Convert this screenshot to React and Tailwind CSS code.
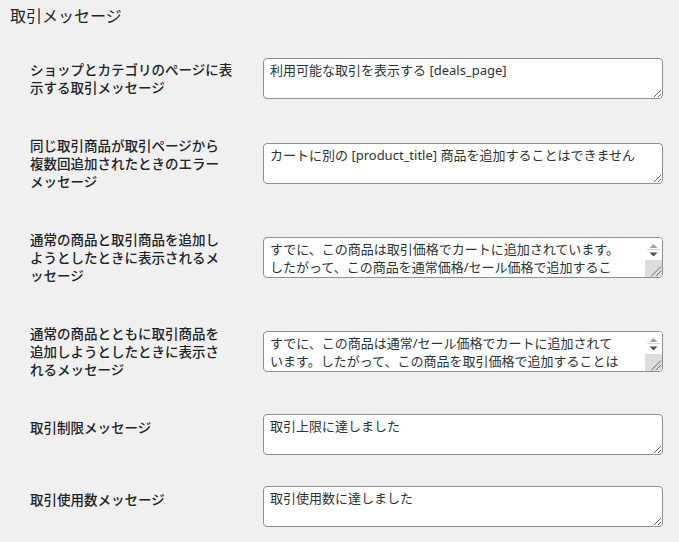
import React from "react";

const FONT = { fontFamily: '"Noto Sans", "Noto Sans CJK JP", sans-serif' };

const rows = [
  {
    label: ["ショップとカテゴリのページに表", "示する取引メッセージ"],
    value: "利用可能な取引を表示する [deals_page]",
  },
  {
    label: ["同じ取引商品が取引ページから", "複数回追加されたときのエラー", "メッセージ"],
    value: "カートに別の [product_title] 商品を追加することはできません",
  },
  {
    label: ["通常の商品と取引商品を追加し", "ようとしたときに表示されるメ", "ッセージ"],
    value:
      "すでに、この商品は取引価格でカートに追加されています。したがって、この商品を通常価格/セール価格で追加することはできません",
    scroll: true,
  },
  {
    label: ["通常の商品とともに取引商品を", "追加しようとしたときに表示さ", "れるメッセージ"],
    value:
      "すでに、この商品は通常/セール価格でカートに追加されています。したがって、この商品を取引価格で追加することはできません",
    scroll: true,
  },
  { label: ["取引制限メッセージ"], value: "取引上限に達しました" },
  { label: ["取引使用数メッセージ"], value: "取引使用数に達しました" },
];

function FakeScrollbar() {
  return (
    <div className="pointer-events-none absolute top-px right-px bottom-px flex w-[17px] flex-col overflow-hidden rounded-r-[3px] bg-white">
      <div className="flex-1">
        <svg width="17" height="22" viewBox="0 0 17 22">
          <polygon points="4.5,10 12.5,10 8.5,6" fill="#a3a3a3" />
          <rect x="2" y="11" width="13" height="1" fill="#d4d4d4" />
          <polygon points="4.5,14.5 12.5,14.5 8.5,18.5" fill="#505050" />
        </svg>
      </div>
      <div className="h-[17px] bg-[#dcdcdc]">
        <svg width="17" height="17" viewBox="0 0 17 17">
          <line x1="6.5" y1="16" x2="16" y2="6.5" stroke="#6b6b6b" strokeWidth="1" />
          <line x1="11" y1="16" x2="16" y2="11" stroke="#6b6b6b" strokeWidth="1" />
        </svg>
      </div>
    </div>
  );
}

function Row({ label, value, scroll }) {
  return (
    <div className="flex">
      <div className="w-[233px] shrink-0 self-start whitespace-nowrap py-5 text-[13.5px] font-medium leading-[18px] text-[#1d2327]">
        {label.map((l, i) => (
          <div key={i}>{l}</div>
        ))}
      </div>
      <div className="self-center pt-[15px] pb-4">
        <div className="relative w-[400px]">
          <textarea
            defaultValue={value}
            style={FONT}
            className={
              scroll
                ? "block h-[41px] w-[400px] resize-none overflow-hidden rounded-[4px] border border-[#8c8f94] bg-white pt-[2px] pl-[6px] pr-[39px] text-[13px] leading-[18px] text-[#2c3338] outline-none"
                : "block h-[41px] w-[400px] resize-y overflow-hidden rounded-[4px] border border-[#8c8f94] bg-white px-[6px] pt-[2px] text-[13px] leading-[18px] text-[#2c3338] outline-none"
            }
          />
          {scroll && <FakeScrollbar />}
        </div>
      </div>
    </div>
  );
}

export default function App() {
  return (
    <div className="min-h-screen bg-[#f0f0f1] pt-[5px] pl-[10px]" style={FONT}>
      <h2 className="text-[16px] font-normal leading-[22px] text-[#1d2327]">取引メッセージ</h2>
      <div className="mt-[14px] flex flex-col pl-5">
        {rows.map((r, i) => (
          <Row key={i} {...r} />
        ))}
      </div>
    </div>
  );
}
